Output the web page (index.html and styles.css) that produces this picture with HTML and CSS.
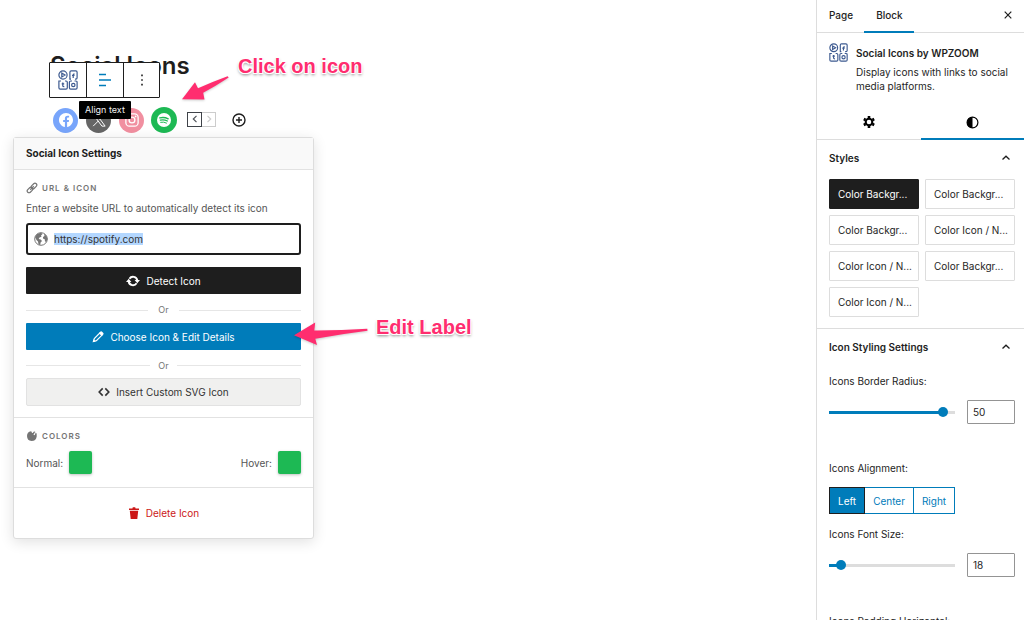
FILE: index.html
```html
<!DOCTYPE html>
<html lang="en">
<head>
<meta charset="utf-8">
<title>Social Icons</title>
<link rel="stylesheet" href="styles.css">
</head>
<body>
<svg class="sprite" aria-hidden="true">
  <symbol id="brand" viewBox="0 0 20 20">
    <g fill="none" stroke="#3d5a90" stroke-width="1.2">
      <circle cx="5" cy="5" r="4.1"/><path d="M3.8 3.1v3.8L7 5z"/>
      <path d="M13 9.1h-1.1V2.2q0-1.3 1.3-1.3h4.6q1.3 0 1.3 1.3v5.6q0 1.3-1.3 1.3H17M15.2 8V5q0-1.200 1.300-1.200M14 5.400h2.500"/>
      <path d="M3 11H.9v6.800q0 1.300 1.300 1.300H8q1.300 0 1.300-1.300V12.300Q9.300 11 8 11H7M4.800 12.500v3.400q0 .8 1.500.8M3.700 13.800h2.500"/>
      <path d="M14 11h-1.300q-1.300 0-1.300 1.300v5.500q0 1.300 1.300 1.300h5.100q1.300 0 1.300-1.300V12.300Q19.100 11 17.800 11H16.500"/><circle cx="15.300" cy="15" r="1.700"/>
    </g>
  </symbol>
  <symbol id="chevron-up" viewBox="0 0 10 10"><path d="M1.500 6.500 5 3.200l3.500 3.300" fill="none" stroke="currentColor" stroke-width="1.300"/></symbol>
</svg>

<div class="app">
  <main class="canvas">
    <h1 class="page-title">Social Icons</h1>
    <div class="icon-row">
      <a class="social facebook" href="#facebook" aria-label="Facebook">
        <svg width="14" height="14" viewBox="0 0 24 24"><path fill="#fff" d="M24 12.1C24 5.4 18.6 0 12 0S0 5.4 0 12.1c0 6 4.400 11 10.100 11.900v-8.400H7.100v-3.500h3V9.400c0-3 1.800-4.700 4.500-4.700 1.300 0 2.700.2 2.700.2v3h-1.500c-1.500 0-2 .9-2 1.900v2.300h3.400l-.5 3.500h-2.800V24C19.600 23.100 24 18.100 24 12.100z"/></svg>
      </a>
      <a class="social x" href="#x" aria-label="X">
        <svg width="14" height="14" viewBox="0 0 24 24"><path fill="none" stroke="#fff" stroke-width="1.7" d="M1.500 1.500h5.500l15.500 21H17zM22 1.500l-9 9.500M11 13.500 2 22.500"/></svg>
      </a>
      <a class="social instagram" href="#instagram" aria-label="Instagram">
        <svg width="14" height="14" viewBox="0 0 24 24"><g fill="none" stroke="#fff" stroke-width="2.200"><rect x="1.500" y="1.500" width="21" height="21" rx="6"/><circle cx="12" cy="12" r="5"/></g><circle cx="18.200" cy="5.800" r="1.500" fill="#fff"/></svg>
      </a>
      <a class="social spotify" href="#spotify" aria-label="Spotify">
        <svg width="14" height="14" viewBox="0 0 24 24"><circle cx="12" cy="12" r="12" fill="#fff"/><g fill="none" stroke="#1db954" stroke-linecap="round"><path stroke-width="2.500" d="M4.800 8.300q7.700-2 14.400 1.600"/><path stroke-width="2.100" d="M5.600 12.200q6.600-1.700 12.200 1.500"/><path stroke-width="1.700" d="M6.300 15.900q5.400-1.300 10 1.300"/></g></svg>
      </a>
      <div class="mover">
        <button class="move" type="button" aria-label="Move left"><svg width="10" height="10" viewBox="0 0 10 10"><path d="M6.500 1.800 3.300 5l3.200 3.200" fill="none" stroke="currentColor" stroke-width="1.200"/></svg></button>
        <button class="move off" type="button" aria-label="Move right"><svg width="10" height="10" viewBox="0 0 10 10"><path d="M3.500 1.800 6.700 5 3.500 8.200" fill="none" stroke="currentColor" stroke-width="1.200"/></svg></button>
      </div>
      <button class="plain" type="button" aria-label="Add icon"><svg width="16" height="16" viewBox="0 0 16 16"><g fill="none" stroke="#1e1e1e" stroke-width="1.400"><circle cx="8" cy="8" r="6"/><path d="M8 5v6M5 8h6"/></g></svg></button>
    </div>

    <div class="toolbar">
      <button type="button" aria-label="Social Icons"><svg width="20" height="20"><use href="#brand"/></svg></button>
      <button type="button" aria-label="Align text"><svg width="14" height="14" viewBox="0 0 14 14"><path d="M1 1.500h7M1 7h12M1 12.500h7" stroke="#007cba" stroke-width="1.300"/></svg></button>
      <button type="button" aria-label="Options"><svg width="4" height="14" viewBox="0 0 4 14"><path d="M1.200 1.600h1.600v1.600H1.200zM1.200 6.200h1.600v1.600H1.200zM1.200 10.800h1.600v1.600H1.200z" fill="#1e1e1e"/></svg></button>
    </div>
    <div class="tooltip" role="tooltip">Align text</div>

    <section class="popover" aria-label="Social Icon Settings">
      <h2 class="popover-title">Social Icon Settings</h2>
      <div class="popover-part">
        <h3 class="eyebrow"><svg width="12" height="12" viewBox="0 0 12 12"><g fill="none" stroke="currentColor" stroke-width="1.200" transform="rotate(-45 6 6)"><rect x="0" y="4.200" width="6.300" height="3.600" rx="1.800"/><rect x="5.700" y="4.200" width="6.300" height="3.600" rx="1.800"/><path d="M3.500 6h5"/></g></svg>URL &amp; Icon</h3>
        <label class="hint" for="url">Enter a website URL to automatically detect its icon</label>
        <div class="url-box">
          <svg width="14" height="14" viewBox="0 0 14 14"><circle cx="7" cy="7" r="6.300" fill="#fff" stroke="#757575" stroke-width="1"/><path fill="#757575" d="M1 5 3 2 7 .7 8.500 2 7 3.500 7.500 4.800 5.500 5.500 4.700 7l2 .6L8 9 6.600 10.600 6.200 13 4.500 12.500 4 9.500 2.500 8zM10 1.500l2.500 2.500L13.500 7l-1.300 3.200-1.200-1-.3-2L9 6.500 9 5l1.500-1z"/></svg>
          <input id="url" class="url" type="text" size="14" value="https://spotify.com">
        </div>
        <button class="btn dark" type="button"><svg width="14" height="12" viewBox="0 0 14 12"><g fill="none" stroke="#fff" stroke-width="1.900"><path d="M3.400 3.800a4.300 4.300 0 0 1 7.900 1.700M10.600 8.200a4.300 4.300 0 0 1-7.900-1.700"/></g><path fill="#fff" d="M8.600 5H14l-2.700 3.200zM0 7h5.400L2.700 3.800z"/></svg>Detect Icon</button>
        <div class="or wide">Or</div>
        <button class="btn blue" type="button"><svg width="12" height="12" viewBox="0 0 12 12"><path d="M1.500 10.500 2.300 7.600 7.700 2.200l2.100 2.100-5.400 5.400z" fill="none" stroke="#fff" stroke-width="1.200"/><path fill="#fff" d="M7.200 1.800 8.500.6q.8-.6 1.600.1l1.200 1.200q.7.8 0 1.600l-1.200 1.300zM.7 11.300l.9-3 2.100 2.100z"/></svg>Choose Icon &amp; Edit Details</button>
        <div class="or">Or</div>
        <button class="btn pale" type="button"><svg width="12" height="10" viewBox="0 0 12 10"><path d="M4.700 1.400 1.200 5l3.500 3.600M7.300 1.400 10.800 5 7.300 8.600" fill="none" stroke="currentColor" stroke-width="1.600"/></svg>Insert Custom SVG Icon</button>
      </div>
      <div class="popover-part">
        <h3 class="eyebrow"><svg width="12" height="12" viewBox="0 0 12 12"><path fill="currentColor" d="M1 6Q1 2 5 1.300q.5 0 .7 1 .3 1.200 1.300.5Q7.800 1 9.300 1.800L8.200 3.600Q7 5 8 5.200q1 0 1.800-2.700 1.300.6.900 4Q10 11 5.500 11 1.200 10.800 1 6z"/></svg>Colors</h3>
        <div class="colors">
          <div class="color">Normal:<button class="swatch" type="button" aria-label="Normal color"></button></div>
          <div class="color">Hover:<button class="swatch" type="button" aria-label="Hover color"></button></div>
        </div>
      </div>
      <div class="popover-end">
        <button class="delete" type="button"><svg width="12" height="12" viewBox="0 0 12 12"><path fill="currentColor" d="M1 1.500h3.500V.9Q4.500.2 5.200.2h1.600q.7 0 .7.700v.6H11v1.400H1zM1.800 3.700h8.400l-.9 8.300H2.700z"/></svg>Delete Icon</button>
      </div>
    </section>

    <p class="note note-click">Click on icon</p>
    <svg class="arrow arrow-click" width="50" height="28" viewBox="180 74 50 28"><path d="M182 99.200 195 82.300 198 88.300Q212 82 227.600 76.300L228.700 77.600Q216 86 203.200 92.800L204.500 99.600z"/></svg>
    <p class="note note-edit">Edit Label</p>
    <svg class="arrow arrow-edit" width="78" height="28" viewBox="292 320 78 28"><path d="M294 335.200 315.200 322.500 314.300 330.500Q340 330.600 367.300 328.800L367.500 330.800Q340 334.300 315.300 338.700L317 345z"/></svg>
  </main>

  <aside class="sidebar">
    <div class="tabs">
      <button class="tab" type="button">Page</button>
      <button class="tab current" type="button">Block</button>
      <button class="close" type="button" aria-label="Close"><svg width="10" height="10" viewBox="0 0 10 10"><path d="m1.700 1.700 6.600 6.600m0-6.600L1.700 8.300" stroke="#1e1e1e" stroke-width="1.200"/></svg></button>
    </div>
    <div class="card">
      <svg width="19" height="19"><use href="#brand"/></svg>
      <div>
        <h2 class="card-title">Social Icons by WPZOOM</h2>
        <p class="card-text">Display icons with links to social media platforms.</p>
      </div>
    </div>
    <div class="modes">
      <button class="mode" type="button" aria-label="Settings"><svg width="12" height="12" viewBox="0 0 12 12"><circle cx="6" cy="6" r="3.300" fill="none" stroke="#000" stroke-width="2"/><path d="M6 0v2M6 10v2M.8 3l1.800 1M9.400 8l1.800 1M.8 9l1.800-1M9.400 4l1.800-1" stroke="#000" stroke-width="2.600"/></svg></button>
      <button class="mode current" type="button" aria-label="Styles"><svg width="13" height="13" viewBox="0 0 13 13"><circle cx="6.500" cy="6.500" r="5.400" fill="none" stroke="#000" stroke-width="1.200"/><path d="M6.500 1a5.500 5.500 0 0 0 0 11z"/></svg></button>
    </div>
    <section class="panel">
      <button class="panel-head" type="button">Styles<svg width="10" height="10"><use href="#chevron-up"/></svg></button>
      <div class="style-grid">
        <button class="style on" type="button">Color Backgr...</button>
        <button class="style" type="button">Color Backgr...</button>
        <button class="style" type="button">Color Backgr...</button>
        <button class="style" type="button">Color Icon / N...</button>
        <button class="style" type="button">Color Icon / N...</button>
        <button class="style" type="button">Color Backgr...</button>
        <button class="style" type="button">Color Icon / N...</button>
      </div>
    </section>
    <section class="panel">
      <button class="panel-head" type="button">Icon Styling Settings<svg width="10" height="10"><use href="#chevron-up"/></svg></button>
      <div class="field first">
        <label for="radius">Icons Border Radius:</label>
        <div class="slider">
          <input id="radius" class="range" type="range" min="0" max="53" value="50" style="--fill: 92%">
          <input class="number" type="text" value="50" aria-label="Icons Border Radius value">
        </div>
      </div>
      <div class="field">
        <span id="align">Icons Alignment:</span>
        <div class="align" role="group" aria-labelledby="align">
          <button class="on" type="button">Left</button><button type="button">Center</button><button type="button">Right</button>
        </div>
      </div>
      <div class="field">
        <label for="size">Icons Font Size:</label>
        <div class="slider">
          <input id="size" class="range" type="range" min="14" max="85" value="18" style="--fill: 9%">
          <input class="number" type="text" value="18" aria-label="Icons Font Size value">
        </div>
      </div>
      <div class="field">
        <label for="padding">Icons Padding Horizontal:</label>
        <div class="slider">
          <input id="padding" class="range" type="range" min="0" max="50" value="6" style="--fill: 12%">
          <input class="number" type="text" value="6" aria-label="Icons Padding Horizontal value">
        </div>
      </div>
    </section>
  </aside>
</div>
</body>
</html>
```

FILE: styles.css
```css
* { box-sizing: border-box; }
body {
  margin: 0;
  background: #fff;
  color: #1e1e1e;
  font: 10px/14px Inter, sans-serif;
}
h1, h2, h3, p { margin: 0; }
button, input { font: inherit; color: inherit; margin: 0; }
button { padding: 0; border: 0; background: none; cursor: pointer; }
svg { flex: none; display: block; }
.sprite { position: absolute; width: 0; height: 0; }
.app { display: flex; height: 100vh; overflow: hidden; }
.canvas { position: relative; flex: 1; padding: 50px 50px 0; }

/* Page content */
.page-title { font-size: 24px; line-height: 32px; font-weight: 600; }
.icon-row { display: flex; align-items: center; gap: 8px; padding: 25px 0 0 3px; }
.social { display: flex; align-items: center; justify-content: center; width: 25px; height: 25px; border-radius: 50%; }
.facebook { background: #78a5fb; }
.x { background: #666; }
.instagram { background: #f18fa0; }
.spotify { width: 26px; height: 26px; margin-left: -1px; background: #1db954; }
.mover { display: flex; margin: 0 0 2px 2px; }
.move { display: flex; align-items: center; justify-content: center; width: 15px; height: 15px; border: 1px solid #3f4349; color: #50545a; }
.move.off { width: 14px; border-color: #ccc; border-left: 0; color: #ccc; }
.plain { margin-left: 7px; }

/* Floating block toolbar */
.toolbar { position: absolute; top: 62px; left: 49px; display: flex; border: 1px solid #1e1e1e; border-radius: 1px; background: #fff; }
.toolbar button { display: flex; align-items: center; justify-content: center; width: 37px; height: 34px; border-right: 1px solid #1e1e1e; }
.toolbar button:last-child { width: 35px; border-right: 0; }
.tooltip { position: absolute; top: 101px; left: 79px; padding: 2px 6px; border-radius: 1px; background: #000; color: #f0f0f0; font-size: 9px; }

/* Icon settings popover */
.popover { position: absolute; top: 137px; left: 13px; width: 301px; border: 1px solid #ddd; border-radius: 3px; background: #fff; box-shadow: 0 3px 14px rgba(0, 0, 0, .12); }
.popover-title { padding: 8px 12px 9px; border-bottom: 1px solid #e2e2e2; background: #f9f9f9; font-size: 10px; line-height: 14px; font-weight: 700; }
.popover-part { padding: 12px 12px 11px; border-bottom: 1px solid #e2e2e2; }
.eyebrow { display: flex; align-items: center; gap: 4px; color: #757575; font-size: 8px; line-height: 12px; font-weight: 600; letter-spacing: 1px; text-transform: uppercase; }
.hint { display: block; margin: 8px 0; color: #555; line-height: 13px; }
.url-box { display: flex; align-items: center; gap: 6px; height: 32px; padding: 0 6px; border: 2px solid #1e1e1e; border-radius: 3px; }
.url { field-sizing: content; height: 12px; padding: 0; border: 0; outline: 0; background: #b3d7ff; color: #333; }
.btn { display: flex; align-items: center; justify-content: center; gap: 6px; width: 100%; height: 27px; border-radius: 1px; }
.dark { margin-top: 12px; background: #1e1e1e; color: #fff; }
.blue { background: #007cba; color: #fff; }
.pale { height: 28px; border: 1px solid #e2e2e2; border-radius: 2px; background: #f0f0ef; color: #333; }
.or { display: flex; align-items: center; gap: 8px; height: 28px; padding-top: 3px; color: #757575; font-size: 9px; }
.or::before, .or::after { content: ""; flex: 1; height: 1px; background: #e6e6e6; }
.or.wide { gap: 10px; height: 29px; }
.colors { display: flex; justify-content: space-between; margin: 9px 0 2px; color: #555; }
.color { display: flex; align-items: center; gap: 6px; }
.swatch { width: 23px; height: 23px; border-radius: 2px; background: #1db954; box-shadow: 0 1px 3px rgba(0, 0, 0, .25); }
.popover-end { display: flex; justify-content: center; padding: 18px; }
.delete { display: flex; align-items: center; gap: 6px; color: #cc1818; }

/* Callouts drawn over the editor */
.note { position: absolute; color: #ff2d6f; font: bold 20px/24px "Liberation Sans", Arial, sans-serif; white-space: nowrap; text-shadow: 1px 1px 0 #fff, -1px -1px 0 #fff, 1px -1px 0 #fff, -1px 1px 0 #fff, 0 2px 3px rgba(0, 0, 0, .5); }
.note-click { top: 54px; left: 238px; }
.note-edit { top: 315px; left: 376px; }
.arrow { position: absolute; fill: #ff2d6f; filter: drop-shadow(0 1px 1px rgba(0, 0, 0, .2)); }
.arrow-click { top: 74px; left: 180px; }
.arrow-edit { top: 320px; left: 292px; }

/* Settings sidebar */
.sidebar { flex: none; width: 208px; border-left: 1px solid #ddd; }
.tabs { display: flex; height: 33px; border-bottom: 1px solid #ddd; }
.tab { padding: 0 11px 2px 12px; margin-bottom: -1px; border-bottom: 2px solid transparent; font-weight: 500; }
.tab.current { border-color: #007cba; }
.close { margin-left: auto; padding: 0 11px 2px 10px; }
.card { display: flex; gap: 8px; padding: 10px 12px 14px; }
.card-title { margin: 3px 0 5px; font-size: 10px; line-height: 14px; font-weight: 600; }
.modes { display: flex; border-bottom: 1px solid #ddd; }
.mode { display: flex; flex: 1; align-items: center; justify-content: center; height: 33px; padding-bottom: 1px; margin-bottom: -1px; border-bottom: 2px solid transparent; }
.mode.current { border-color: #007cba; }
.panel { padding: 0 9px 11px 12px; border-bottom: 1px solid #ddd; }
.panel-head { display: flex; align-items: center; justify-content: space-between; width: 100%; height: 36px; padding-right: 4px; font-weight: 600; text-align: left; }
.style-grid { display: grid; grid-template-columns: repeat(2, minmax(0, 1fr)); gap: 6px; padding-top: 3px; }
.style { height: 30px; padding: 0 8px; border: 1px solid #ddd; border-radius: 1px; text-align: left; white-space: nowrap; }
.style.on { border-color: #1e1e1e; background: #1e1e1e; color: #fff; }
.field { padding-bottom: 13px; }
.field.first { padding-top: 9px; }
.slider { display: flex; align-items: center; gap: 12px; padding: 12px 0 24px; }
.range { flex: 1; min-width: 0; height: 12px; appearance: none; background: linear-gradient(to right, #007cba var(--fill), #ddd var(--fill)) center / 100% 3px no-repeat; }
.range::-webkit-slider-thumb { appearance: none; width: 10px; height: 10px; border-radius: 50%; background: #007cba; }
.number { width: 48px; height: 24px; padding: 0 5px; border: 1px solid #949494; border-radius: 1px; }
.align { display: flex; padding-top: 12px; }
.align button { height: 27px; padding: 0 8px; border: 1px solid #007cba; border-left: 0; color: #007cba; }
.align .on { border: 1px solid #1e1e1e; background: #007cba; color: #fff; }
```
